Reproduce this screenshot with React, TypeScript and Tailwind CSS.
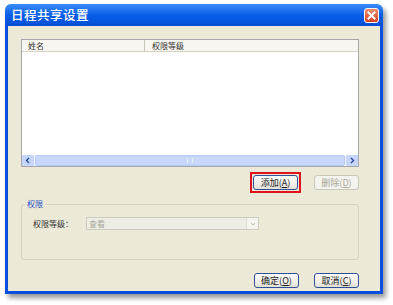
const font = { fontFamily: '"Noto Sans CJK SC", "Noto Sans", sans-serif' };

function XpButton({ label, disabled }: { label: React.ReactNode; disabled?: boolean }) {
  return (
    <div
      className={
        "flex h-[15px] w-[45px] items-center justify-center rounded-[3px] border text-[9px] leading-none " +
        (disabled
          ? "border-[#c9c7ba] bg-[#f4f3ee] text-[#aca899]"
          : "border-[#2d4f95] bg-gradient-to-b from-white to-[#e3e1d6] text-[#222]")
      }
    >
      {label}
    </div>
  );
}

export default function App() {
  return (
    <div className="h-[305px] w-[393px] bg-white pl-[5px] pt-[4px]" style={font}>
      {/* dialog window */}
      <div className="flex h-[290px] w-[378px] flex-col rounded-t-[6px] shadow-[3px_4px_5px_rgba(0,0,0,0.4)]">
        {/* title bar */}
        <div className="flex h-[22px] items-center justify-between rounded-t-[6px] bg-gradient-to-b from-[#3a8cf8] via-[#0a5ee8] to-[#0450d6] pl-[6px] pr-[4px]">
          <span className="text-[12.5px] font-medium tracking-[0.5px] text-white">日程共享设置</span>
          <div className="flex h-[15px] w-[15px] items-center justify-center rounded-[3px] border border-white bg-gradient-to-b from-[#ee8a6a] to-[#d3431f]">
            <svg width="9" height="9" viewBox="0 0 9 9">
              <path d="M1.5 1.5 L7.5 7.5 M7.5 1.5 L1.5 7.5" stroke="white" strokeWidth="2" strokeLinecap="square" />
            </svg>
          </div>
        </div>

        {/* body */}
        <div className="flex flex-1 flex-col border-x-[3px] border-b-[3px] border-[#0b4fd8] bg-[#ece9d8] pl-[13px] pr-[21px] pt-[13px]">
          {/* list */}
          <div className="flex h-[128px] flex-col border border-[#a7a6aa] bg-white">
            <div className="flex h-[12px] items-center border-b border-[#d6d2c2] bg-[#f7f6f1] text-[8px] text-[#333]">
              <div className="flex h-full w-[123px] items-center border-r border-[#c7c5b8] pl-[6px]">姓名</div>
              <div className="pl-[7px]">权限等级</div>
            </div>
            <div className="flex-1" />
            <div className="flex h-[11px] bg-[#f2f5fd]">
              <div className="flex w-[12px] items-center justify-center rounded-[1px] bg-[#c6d6fb]">
                <svg width="6" height="7" viewBox="0 0 6 7">
                  <path d="M4 1 L1.5 3.5 L4 6" stroke="#27469a" strokeWidth="1.3" fill="none" />
                </svg>
              </div>
              <div className="mx-[1px] flex flex-1 items-center justify-center rounded-[2px] border border-[#b6c9f7] bg-[#c8d8fc]">
                <div className="h-[5px] w-[6px] border-x border-[#e9eefd]" />
              </div>
              <div className="flex w-[12px] items-center justify-center rounded-[1px] bg-[#c6d6fb]">
                <svg width="6" height="7" viewBox="0 0 6 7">
                  <path d="M2 1 L4.5 3.5 L2 6" stroke="#27469a" strokeWidth="1.3" fill="none" />
                </svg>
              </div>
            </div>
          </div>

          {/* add / delete */}
          <div className="mt-[5px] flex items-center justify-end gap-[13px]">
            <div className="border-2 border-[#e0121b] p-[1px]">
              <XpButton label={<>添加(<u>A</u>)</>} />
            </div>
            <XpButton label={<>删除(<u>D</u>)</>} disabled />
          </div>

          {/* permission group */}
          <div className="relative mt-[11px] h-[56px] rounded-[3px] border border-[#d5d2c4]">
            <span className="absolute -top-[7px] left-[3px] bg-[#ece9d8] px-[2px] text-[8px] leading-[12px] text-[#1e50c8]">
              权限
            </span>
            <div className="mt-[12px] flex items-center pl-[11px]">
              <span className="w-[53px] text-[8px] text-[#333]">权限等级：</span>
              <div className="flex h-[13px] w-[173px] items-center border border-[#cdcbbd] bg-[#efeee5]">
                <span className="flex-1 pl-[2px] text-[8px] text-[#aca899]">查看</span>
                <div className="flex h-full w-[12px] items-center justify-center border-l border-[#e3e1d6] bg-[#f4f3ee]">
                  <svg width="6" height="4" viewBox="0 0 6 4">
                    <path d="M1 1 L3 3 L5 1" stroke="#c3c1b5" strokeWidth="1" fill="none" />
                  </svg>
                </div>
              </div>
            </div>
          </div>

          {/* ok / cancel */}
          <div className="mt-[13px] flex justify-end gap-[15px]">
            <XpButton label={<>确定(<u>O</u>)</>} />
            <XpButton label={<>取消(<u>C</u>)</>} />
          </div>
        </div>
      </div>
    </div>
  );
}
